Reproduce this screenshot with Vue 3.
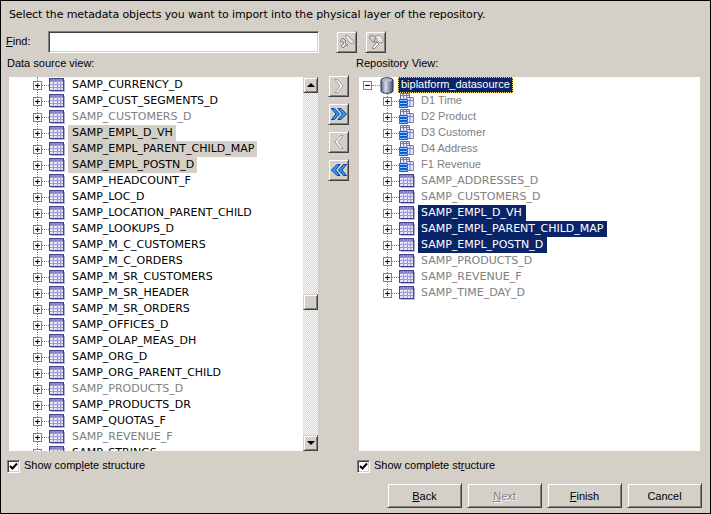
<script setup>
const leftRows = [
  ['SAMP_CURRENCY_D'], ['SAMP_CUST_SEGMENTS_D'], ['SAMP_CUSTOMERS_D', 'dim'],
  ['SAMP_EMPL_D_VH', 'sel'], ['SAMP_EMPL_PARENT_CHILD_MAP', 'sel'], ['SAMP_EMPL_POSTN_D', 'sel'],
  ['SAMP_HEADCOUNT_F'], ['SAMP_LOC_D'], ['SAMP_LOCATION_PARENT_CHILD'], ['SAMP_LOOKUPS_D'],
  ['SAMP_M_C_CUSTOMERS'], ['SAMP_M_C_ORDERS'], ['SAMP_M_SR_CUSTOMERS'], ['SAMP_M_SR_HEADER'],
  ['SAMP_M_SR_ORDERS'], ['SAMP_OFFICES_D'], ['SAMP_OLAP_MEAS_DH'], ['SAMP_ORG_D'],
  ['SAMP_ORG_PARENT_CHILD'], ['SAMP_PRODUCTS_D', 'dim'], ['SAMP_PRODUCTS_DR'], ['SAMP_QUOTAS_F'],
  ['SAMP_REVENUE_F', 'dim'], ['SAMP_STRINGS']
].map(([name, state]) => ({ name, state }))

const rightRows = [
  ['D1 Time', 'dim mixed', 'cube'], ['D2 Product', 'dim mixed', 'cube'], ['D3 Customer', 'dim mixed', 'cube'],
  ['D4 Address', 'dim mixed', 'cube'], ['F1 Revenue', 'dim mixed', 'cube'],
  ['SAMP_ADDRESSES_D', 'dim'], ['SAMP_CUSTOMERS_D', 'dim'],
  ['SAMP_EMPL_D_VH', 'hi'], ['SAMP_EMPL_PARENT_CHILD_MAP', 'hi'], ['SAMP_EMPL_POSTN_D', 'hi'],
  ['SAMP_PRODUCTS_D', 'dim'], ['SAMP_REVENUE_F', 'dim'], ['SAMP_TIME_DAY_D', 'dim']
].map(([name, state, icon]) => ({ name, state, icon }))
</script>

<template>
  <div class="dialog">
    <p class="intro">Select the metadata objects you want to import into the physical layer of the repository.</p>

    <div class="find-row">
      <label class="find-label"><u>F</u>ind:</label>
      <div class="find-input"></div>
      <button class="btn square find-first">
        <svg width="18" height="18" viewBox="0 0 18 18">
          <path d="M2 8l3-3 3 3-1 1 3 3-1 1-1-1-3 3-2-2 3-3-1-1z" fill="#d4d0c8" stroke="#808080"/>
          <path d="M7 3l2-1 3 3 3 2 1 3-3 1-3-3z" fill="#e8e6e0" stroke="#9a9a9a"/>
          <path d="M4 14l3-3" stroke="#fff"/>
        </svg>
      </button>
      <button class="btn square find-next">
        <svg width="18" height="18" viewBox="0 0 18 18">
          <path d="M2 4l3-2 4 3-2 3 3 1-1 2-4-3-1-1z" fill="#d4d0c8" stroke="#808080"/>
          <path d="M8 3l4-1 4 3 0 4-3 1-3-3z" fill="#e8e6e0" stroke="#9a9a9a"/>
          <path d="M10 9l-5 6 2 1 5-5z" fill="#fff" stroke="#808080"/>
        </svg>
      </button>
    </div>

    <div class="labels">
      <span class="label-left">Data source view:</span>
      <span class="label-right">Repository View:</span>
    </div>

    <div class="panes">
      <div class="tree left-tree">
        <div class="tree-body">
          <div class="guide left-guide"></div>
          <div v-for="row in leftRows" :key="row.name" class="row indent-left">
            <span class="expander">+</span><span class="dots"></span>
            <svg class="tbl" width="16" height="14" viewBox="0 0 16 14">
              <rect x="0.5" y="0.5" width="14" height="12" fill="#e4e4fa" stroke="#44448c"/>
              <path d="M1 1h13v2H1z" fill="#8080c0"/>
              <path d="M1 3.5h13M1 6.5h13M1 9.5h13M4.5 1v11M8.5 1v11M11.5 1v11" stroke="#9c9cd0" fill="none"/>
              <path d="M15.5 2v11.5H2" stroke="#b4b4cc" fill="none"/>
            </svg>
            <span class="name" :class="row.state">{{ row.name }}</span>
          </div>
        </div>
        <div class="scrollbar">
          <div class="sb-btn"><i class="tri up"></i></div>
          <div class="sb-track"><div class="sb-thumb"></div></div>
          <div class="sb-btn"><i class="tri down"></i></div>
        </div>
      </div>

      <div class="mid-buttons">
        <button class="btn mid">
          <svg width="14" height="16" viewBox="0 0 14 16"><path d="M3 1.500h2.500L11 8l-5.500 6.500H3L8 8z" fill="#fff" stroke="#9a9a9a"/></svg>
        </button>
        <button class="btn mid">
          <svg width="16" height="16" viewBox="0 0 16 16"><path d="M.5 2.500h3L8.500 8l-5 5.500h-3L5 8z M7 2.500h3L15.500 8 10 13.500H7L11.500 8z" fill="#2f9cf0" stroke="#0a3ca8"/></svg>
        </button>
        <button class="btn mid">
          <svg width="14" height="16" viewBox="0 0 14 16"><path d="M11 1.500H8.500L3 8l5.500 6.500H11L6 8z" fill="#fff" stroke="#9a9a9a"/></svg>
        </button>
        <button class="btn mid">
          <svg width="16" height="16" viewBox="0 0 16 16"><path d="M15.500 2.500h-3L7.500 8l5 5.500h3L11 8z M9 2.500H6L.5 8 6 13.500h3L4.500 8z" fill="#2f9cf0" stroke="#0a3ca8"/></svg>
        </button>
      </div>

      <div class="tree right-tree">
        <div class="root-row">
          <span class="expander">−</span><span class="dots root-dots"></span>
          <svg class="db" width="14" height="17" viewBox="0 0 14 17">
            <defs><linearGradient id="dbg" x1="0" x2="1"><stop offset="0" stop-color="#5a6a8c"/><stop offset=".4" stop-color="#d8dee8"/><stop offset="1" stop-color="#3c4a6c"/></linearGradient></defs>
            <path d="M1 3c0-3 12-3 12 0v11c0 3-12 3-12 0z" fill="url(#dbg)" stroke="#2c3450"/>
            <ellipse cx="7" cy="3" rx="5" ry="1.600" fill="#b4bccc"/>
          </svg>
          <span class="root-name">biplatform_datasource</span>
        </div>
        <div class="guide right-guide"></div>
        <div v-for="row in rightRows" :key="row.name" class="row indent-right">
          <span class="expander">+</span><span class="dots"></span>
          <svg v-if="row.icon === 'cube'" class="tbl" width="16" height="16" viewBox="0 0 16 16">
            <path d="M1.500 .5h9v7h-9z" fill="#e4e4fa" stroke="#6a6aa0"/>
            <path d="M7.500 4.500h7v9h-7z" fill="#e4e4fa" stroke="#8080a8"/>
            <path d="M1.500 2.500h9M4.500 .5v7M7.500 .5v4M7.500 7.500h7M11 4.500v9" stroke="#7c7cb4" fill="none"/>
            <path d="M.5 6.500h8v2h-8zM.5 9.500h8v2h-8zM.5 12.500h8v2h-8z" fill="#8cc8ff" stroke="#0a5cd0"/>
          </svg>
          <svg v-else class="tbl" width="16" height="14" viewBox="0 0 16 14">
            <rect x="0.5" y="0.5" width="14" height="12" fill="#e4e4fa" stroke="#44448c"/>
            <path d="M1 1h13v2H1z" fill="#8080c0"/>
            <path d="M1 3.5h13M1 6.5h13M1 9.5h13M4.5 1v11M8.5 1v11M11.5 1v11" stroke="#9c9cd0" fill="none"/>
            <path d="M15.5 2v11.5H2" stroke="#b4b4cc" fill="none"/>
          </svg>
          <span class="name" :class="row.state">{{ row.name }}</span>
        </div>
      </div>
    </div>

    <div class="checks">
      <label class="check check-left"><span class="box"><svg width="9" height="9" viewBox="0 0 9 9"><path d="M1 4l2.500 2.500L8 1.500" fill="none" stroke="#000" stroke-width="2"/></svg></span><span class="check-text">Show comp<u>l</u>ete structure</span></label>
      <label class="check check-right"><span class="box"><svg width="9" height="9" viewBox="0 0 9 9"><path d="M1 4l2.500 2.500L8 1.500" fill="none" stroke="#000" stroke-width="2"/></svg></span><span class="check-text">Show complete st<u>r</u>ucture</span></label>
    </div>

    <div class="footer">
      <button class="btn wide"><span><u>B</u>ack</span></button>
      <button class="btn wide disabled"><span><u>N</u>ext</span></button>
      <button class="btn wide"><span><u>F</u>inish</span></button>
      <button class="btn wide"><span>Cancel</span></button>
    </div>
  </div>
</template>

<style>
html, body { margin: 0; background: #d4d0c8; }
</style>

<style scoped>
.dialog {
  box-sizing: border-box;
  width: 711px;
  height: 514px;
  background: #d4d0c8;
  border: 1px solid #000;
  font: 11px/16px "Liberation Sans", sans-serif;
  color: #000;
  overflow: hidden;
  display: flex;
  flex-direction: column;
}
.intro { margin: 6px 0 0 8px; height: 16px; white-space: nowrap; font-family: "DejaVu Sans", sans-serif; letter-spacing: -0.115px; }
.find-row { display: flex; align-items: center; height: 24px; margin-top: 7px; }
.find-label { width: 47px; padding: 0 0 2px 5px; box-sizing: border-box; line-height: 14px; }
.find-input {
  box-sizing: border-box; width: 271px; height: 22px; background: #fff;
  border: 1px solid; border-color: #808080 #fff #fff #808080;
  box-shadow: inset 1px 1px 0 #404040, inset -1px -1px 0 #d4d0c8;
}
.btn {
  box-sizing: border-box; padding: 0; margin: 0; background: #d4d0c8; color: #000;
  font: inherit; display: flex; align-items: center; justify-content: center;
  border: 1px solid; border-color: #d4d0c8 #404040 #404040 #d4d0c8;
  box-shadow: inset 1px 1px 0 #fff, inset -1px -1px 0 #808080;
}
.square { width: 21px; height: 22px; }
.find-first { margin-left: 17px; }
.find-next { margin-left: 8px; }
.labels { display: flex; height: 16px; margin-top: 2px; line-height: 14px; }
.label-left { margin-left: 6px; width: 349px; }
.panes { display: flex; height: 374px; margin-top: 5px; align-items: flex-start; }
.tree { background: #fff; height: 374px; overflow: hidden; position: relative; }
.left-tree { width: 309px; margin-left: 8px; display: flex; }
.tree-body { width: 294px; height: 374px; overflow: hidden; position: relative; }
.right-tree { width: 341px; margin-left: 10px; }
.row { display: flex; align-items: center; height: 16px; position: relative; white-space: nowrap; font-family: "DejaVu Sans", sans-serif; }
.indent-left { padding-left: 24px; }
.indent-right { padding-left: 24px; }
.expander {
  box-sizing: border-box; width: 9px; height: 9px; border: 1px solid #808080; background: #fff;
  flex: none; position: relative; overflow: hidden;
  font: bold 9px/7px "DejaVu Sans Mono", monospace; color: #000; text-align: center;
}
.dots { width: 7px; height: 0; border-top: 1px dotted #808080; flex: none; }
.root-dots { width: 8px; }
.tbl { flex: none; }
.name { margin-left: 3px; padding: 0 3px 0 4px; height: 16px; }
.indent-right .name { padding: 0 4px 0 3px; }
.name.dim { color: #808080; }
.name.mixed { font-family: "Liberation Sans", sans-serif; line-height: 14px; }
.name.sel { background: #d4d0c8; }
.name.hi { background: #0a246a; color: #fff; }
.guide { position: absolute; width: 0; border-left: 1px dotted #808080; }
.left-guide { left: 28px; top: 0; height: 374px; }
.right-guide { left: 28px; top: 16px; height: 200px; }
.root-row { display: flex; align-items: center; height: 16px; padding-left: 4px; }
.db { flex: none; position: relative; z-index: 1; }
.root-name { margin-left: 4px; padding: 0 3px 2px; line-height: 14px; background: #0a246a; color: #fff; outline: 1px dotted #f0d060; outline-offset: -1px; }
.scrollbar { width: 15px; height: 374px; display: flex; flex-direction: column; flex: none; }
.sb-btn {
  box-sizing: border-box; width: 15px; height: 16px; background: #d4d0c8; flex: none;
  border: 1px solid; border-color: #d4d0c8 #404040 #404040 #d4d0c8;
  box-shadow: inset 1px 1px 0 #fff, inset -1px -1px 0 #808080;
  display: flex; align-items: center; justify-content: center;
}
.tri { width: 0; height: 0; border-left: 4px solid transparent; border-right: 4px solid transparent; }
.tri.up { border-bottom: 4px solid #000; }
.tri.down { border-top: 4px solid #000; }
.sb-track {
  flex: 1; padding-top: 201px; box-sizing: border-box;
  background: repeating-conic-gradient(#d4d0c8 0 25%, #fff 0 50%) 0 0 / 2px 2px;
}
.sb-thumb {
  box-sizing: border-box; width: 15px; height: 16px; background: #d4d0c8;
  border: 1px solid; border-color: #d4d0c8 #404040 #404040 #d4d0c8;
  box-shadow: inset 1px 1px 0 #fff, inset -1px -1px 0 #808080;
}
.mid-buttons { width: 21px; margin-left: 10px; display: flex; flex-direction: column; gap: 6px; margin-top: -2px; flex: none; }
.mid { width: 21px; height: 22px; }
.checks { display: flex; height: 16px; margin-top: 7px; }
.check { display: flex; align-items: center; gap: 4px; }
.check-left { margin-left: 6px; width: 350px; }
.check-text { line-height: 14px; padding-bottom: 2px; }
.box {
  box-sizing: border-box; width: 13px; height: 13px; background: #fff; display: flex; align-items: center; justify-content: center;
  border: 1px solid; border-color: #808080 #fff #fff #808080;
  box-shadow: inset 1px 1px 0 #404040, inset -1px -1px 0 #d4d0c8;
}
.footer { display: flex; gap: 5px; justify-content: flex-end; margin-top: 9px; padding-right: 8px; }
.wide { width: 75px; height: 25px; }
.disabled { color: #808080; text-shadow: 1px 1px 0 #fff; }
</style>
